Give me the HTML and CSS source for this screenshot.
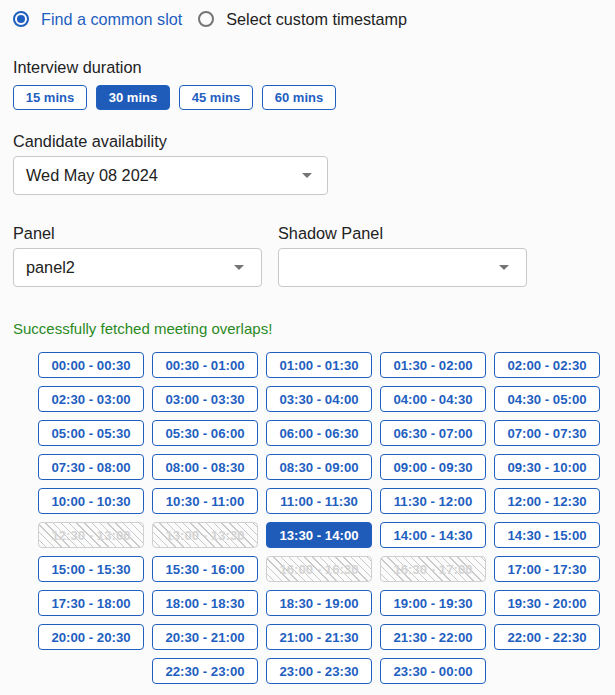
FILE: index.html
```html
<!DOCTYPE html>
<html>
<head>
<meta charset="utf-8">
<link rel="stylesheet" href="styles.css">
</head>
<body>
<div class="page">
  <div class="radios">
    <label class="radio checked"><span class="dot"></span><span>Find a common slot</span></label>
    <label class="radio"><span class="dot"></span><span>Select custom timestamp</span></label>
  </div>

  <div class="label l-duration">Interview duration</div>
  <div class="durations">
    <button class="dur">15 mins</button>
    <button class="dur active">30 mins</button>
    <button class="dur">45 mins</button>
    <button class="dur">60 mins</button>
  </div>

  <div class="label l-avail">Candidate availability</div>
  <div class="select wide"><span>Wed May 08 2024</span><span class="arrow"></span></div>

  <div class="panels">
    <div class="field">
      <div class="label">Panel</div>
      <div class="select"><span>panel2</span><span class="arrow"></span></div>
    </div>
    <div class="field">
      <div class="label">Shadow Panel</div>
      <div class="select"><span></span><span class="arrow"></span></div>
    </div>
  </div>

  <div class="success">Successfully fetched meeting overlaps!</div>

  <div class="slots">
    <button class="slot">00:00 - 00:30</button>
    <button class="slot">00:30 - 01:00</button>
    <button class="slot">01:00 - 01:30</button>
    <button class="slot">01:30 - 02:00</button>
    <button class="slot">02:00 - 02:30</button>
    <button class="slot">02:30 - 03:00</button>
    <button class="slot">03:00 - 03:30</button>
    <button class="slot">03:30 - 04:00</button>
    <button class="slot">04:00 - 04:30</button>
    <button class="slot">04:30 - 05:00</button>
    <button class="slot">05:00 - 05:30</button>
    <button class="slot">05:30 - 06:00</button>
    <button class="slot">06:00 - 06:30</button>
    <button class="slot">06:30 - 07:00</button>
    <button class="slot">07:00 - 07:30</button>
    <button class="slot">07:30 - 08:00</button>
    <button class="slot">08:00 - 08:30</button>
    <button class="slot">08:30 - 09:00</button>
    <button class="slot">09:00 - 09:30</button>
    <button class="slot">09:30 - 10:00</button>
    <button class="slot">10:00 - 10:30</button>
    <button class="slot">10:30 - 11:00</button>
    <button class="slot">11:00 - 11:30</button>
    <button class="slot">11:30 - 12:00</button>
    <button class="slot">12:00 - 12:30</button>
    <button class="slot disabled">12:30 - 13:00</button>
    <button class="slot disabled">13:00 - 13:30</button>
    <button class="slot selected">13:30 - 14:00</button>
    <button class="slot">14:00 - 14:30</button>
    <button class="slot">14:30 - 15:00</button>
    <button class="slot">15:00 - 15:30</button>
    <button class="slot">15:30 - 16:00</button>
    <button class="slot disabled">16:00 - 16:30</button>
    <button class="slot disabled">16:30 - 17:00</button>
    <button class="slot">17:00 - 17:30</button>
    <button class="slot">17:30 - 18:00</button>
    <button class="slot">18:00 - 18:30</button>
    <button class="slot">18:30 - 19:00</button>
    <button class="slot">19:00 - 19:30</button>
    <button class="slot">19:30 - 20:00</button>
    <button class="slot">20:00 - 20:30</button>
    <button class="slot">20:30 - 21:00</button>
    <button class="slot">21:00 - 21:30</button>
    <button class="slot">21:30 - 22:00</button>
    <button class="slot">22:00 - 22:30</button>
    <button class="slot">22:30 - 23:00</button>
    <button class="slot">23:00 - 23:30</button>
    <button class="slot">23:30 - 00:00</button>
  </div>
</div>
</body>
</html>
```

FILE: styles.css
```css
* { box-sizing: border-box; }
html, body {
  margin: 0;
  background: #fbfbfc;
}
body {
  font-family: "Liberation Sans", Arial, sans-serif;
  color: #222;
}
.page {
  padding: 0 0 0 13px;
  width: 615px;
}
.radios {
  display: flex;
  align-items: center;
  gap: 16px;
  height: 38px;
}
.radio {
  display: flex;
  align-items: center;
  gap: 12px;
  font-size: 16.2px;
  color: #222;
}
.radio.checked { color: #1f5fbf; }
.dot {
  width: 16px;
  height: 16px;
  border-radius: 50%;
  border: 2px solid #757575;
  display: inline-block;
  position: relative;
}
.radio.checked .dot { border-color: #1f5fbf; }
.radio.checked .dot::after {
  content: "";
  position: absolute;
  left: 2px;
  top: 2px;
  width: 8px;
  height: 8px;
  border-radius: 50%;
  background: #1f5fbf;
}
.label {
  font-size: 16.3px;
  color: #222;
  line-height: 18px;
}
.l-duration { margin-top: 20px; }
.durations {
  display: flex;
  gap: 9px;
  margin-top: 9px;
}
.dur {
  width: 74px;
  height: 25px;
  border: 1px solid #1f5fbf;
  border-radius: 4px;
  background: #fff;
  color: #1f5fbf;
  font-family: "Liberation Sans", Arial, sans-serif;
  font-weight: bold;
  font-size: 13px;
  padding: 0;
}
.dur.active {
  background: #1f5bb9;
  color: #fff;
}
.l-avail { margin-top: 22px; }
.select {
  margin-top: 6px;
  height: 39px;
  width: 249px;
  border: 1px solid #c8c8c8;
  border-radius: 4px;
  background: #fff;
  display: flex;
  align-items: center;
  justify-content: space-between;
  padding: 0 17px 0 12px;
  font-size: 16.3px;
  color: #222;
}
.select.wide { width: 315px; padding-right: 15px; }
.arrow {
  width: 0;
  height: 0;
  border-left: 5px solid transparent;
  border-right: 5px solid transparent;
  border-top: 5px solid #757575;
}
.panels {
  display: flex;
  gap: 16px;
  margin-top: 29px;
}
.success {
  margin-top: 33px;
  color: #2a8a22;
  font-size: 15px;
  line-height: 17px;
}
.slots {
  margin-top: 15px;
  margin-left: 25px;
  width: 562px;
  display: flex;
  flex-wrap: wrap;
  justify-content: center;
  gap: 8px;
}
.slot {
  width: 106px;
  height: 26px;
  border: 1px solid #1f5fbf;
  border-radius: 4px;
  background: #fff;
  color: #1f5fbf;
  font-family: "Liberation Sans", Arial, sans-serif;
  font-weight: bold;
  font-size: 13.2px;
  padding: 0;
}
.slot.selected {
  background: #1f5bb9;
  color: #fff;
}
.slot.disabled {
  border-color: #d0d0d0;
  color: #d4d4d4;
  background: repeating-linear-gradient(45deg, #fbfbfb 0, #fbfbfb 4.5px, #c9c9c9 4.5px, #c9c9c9 5.5px);
}
```
